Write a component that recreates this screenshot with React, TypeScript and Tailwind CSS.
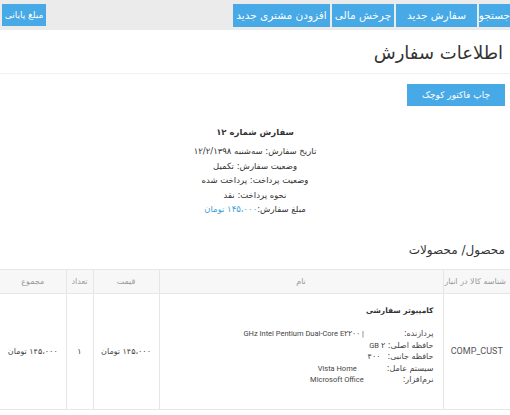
export default function App() {
  const navBtn = "h-[23px] bg-[#47a9e6] text-white text-[10.5px] leading-[23px] whitespace-nowrap text-center";
  return (
    <div
      dir="rtl"
      className="w-[510px] h-[415px] overflow-hidden bg-white text-[#333] font-['DejaVu_Sans',sans-serif]"
    >
      {/* top bar */}
      <div className="flex h-[30px] items-start bg-[#ebebeb] pt-[4px]">
        <div className="flex gap-[2px]">
          <button className={`${navBtn} w-[31px] text-[9.5px]`}>جستجو</button>
          <button className={`${navBtn} w-[81px]`}>سفارش جدید</button>
          <button className={`${navBtn} w-[62px]`}>چرخش مالی</button>
          <button className={`${navBtn} w-[97px]`}>افزودن مشتری جدید</button>
        </div>
        <button className="mr-auto ml-[2px] h-[22px] w-[44px] bg-[#47a9e6] text-white text-[9px] leading-[22px] whitespace-nowrap">
          مبلغ پایانی
        </button>
      </div>

      {/* title */}
      <div className="h-[44px] border-b border-[#f0f0f0] px-[7px] pt-[9px]">
        <h1 className="text-[18px] leading-[28px] font-medium text-[#333]">اطلاعات سفارش</h1>
      </div>

      <div className="px-[5px] pt-[7px]">
        <button className="h-[22px] w-[98px] bg-[#47a9e6] text-white text-[9px] leading-[22px]">
          چاپ فاکتور کوچک
        </button>
      </div>

      {/* order info */}
      <div className="mt-[19px] flex flex-col items-center text-[8.5px] leading-[14.4px] text-[#333]">
        <p className="font-bold mb-[5px]">سفارش شماره ۱۲</p>
        <p>تاریخ سفارش: سه‌شنبه ۱۲/۲/۱۳۹۸</p>
        <p>وضعیت سفارش: تکمیل</p>
        <p>وضعیت پرداخت: پرداخت شده</p>
        <p>نحوه پرداخت: نقد</p>
        <p>
          مبلغ سفارش:<span className="text-[#3d9fd6]">۱۴۵،۰۰۰ تومان</span>
        </p>
      </div>

      <h2 className="mt-[24px] px-[5px] text-[12px] leading-[20px] text-[#333]">محصول/ محصولات</h2>

      {/* products table */}
      <table className="mt-[9px] w-full border-collapse text-[8px] text-[#444]">
        <thead>
          <tr className="h-[24px] bg-[#f7f7f7] text-[#999] border-y border-[#e6e6e6]">
            <th className="w-[67px] font-normal text-right pr-[4px] whitespace-nowrap border-l border-[#e6e6e6]">شناسه کالا در انبار</th>
            <th className="font-normal border-l border-[#e6e6e6]">نام</th>
            <th className="w-[66px] font-normal border-l border-[#e6e6e6]">قیمت</th>
            <th className="w-[27px] font-normal border-l border-[#e6e6e6]">تعداد</th>
            <th className="w-[66px] font-normal">مجموع</th>
          </tr>
        </thead>
        <tbody>
          <tr className="h-[116px] border-b border-[#e6e6e6]">
            <td className="text-center text-[9px] text-[#555] border-l border-[#e6e6e6] font-['Roboto',sans-serif]">COMP_CUST</td>
            <td className="align-top pr-[9px] pt-[11px] border-l border-[#e6e6e6]">
              <p className="font-bold text-[7.5px] leading-[12px] text-[#333]">کامپیوتر سفارشی</p>
              <div className="mt-[11px] text-[8px] leading-[11.5px] text-[#444]">
                <div className="flex">
                  <span>پردازنده:</span>
                  <span dir="ltr" className="mr-[40px] text-[7.5px] font-['Roboto',sans-serif]">GHz Intel Pentium Dual-Core E۲۲۰۰ |</span>
                </div>
                <div className="flex">
                  <span>حافظه اصلی:</span>
                  <span className="mr-[3px] text-[7.5px] font-['Roboto',sans-serif]">۲ GB</span>
                </div>
                <div className="flex">
                  <span>حافظه جانبی:</span>
                  <span className="mr-[7px]">۴۰۰</span>
                </div>
                <div className="flex">
                  <span>سیستم عامل:</span>
                  <span dir="ltr" className="mr-[30px] text-[7.5px] font-['Roboto',sans-serif]">Vista Home</span>
                </div>
                <div className="flex">
                  <span>نرم‌افزار:</span>
                  <span dir="ltr" className="mr-[39px] text-[7.5px] font-['Roboto',sans-serif]">Microsoft Office</span>
                </div>
              </div>
            </td>
            <td className="text-center border-l border-[#e6e6e6]">۱۴۵،۰۰۰ تومان</td>
            <td className="text-center border-l border-[#e6e6e6]">۱</td>
            <td className="text-center">۱۴۵،۰۰۰ تومان</td>
          </tr>
        </tbody>
      </table>
    </div>
  );
}
